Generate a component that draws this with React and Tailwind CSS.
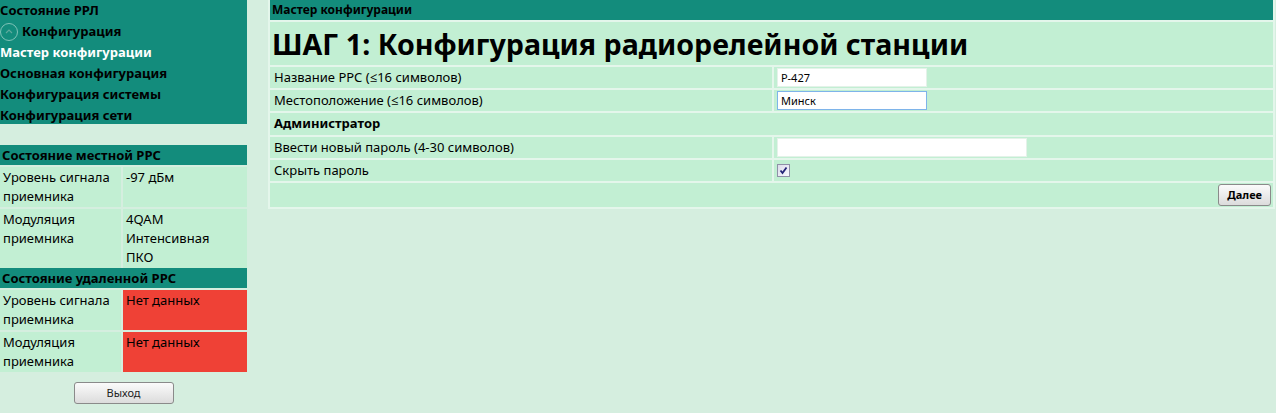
import { useState } from "react";

/* ================= DATA ================= */

const NAV = [
  { label: "Мастер конфигурации", active: true },
  { label: "Основная конфигурация" },
  { label: "Конфигурация системы" },
  { label: "Конфигурация сети" },
];

const LOCAL = [
  { k: ["Уровень сигнала", "приемника"], v: ["-97 дБм"] },
  { k: ["Модуляция", "приемника"], v: ["4QAM", "Интенсивная", "ПКО"] },
];

const REMOTE = [
  { k: ["Уровень сигнала", "приемника"], v: ["Нет данных"] },
  { k: ["Модуляция", "приемника"], v: ["Нет данных"] },
];

/* ================= PAGE ================= */

export default function App() {
  const [name, setName] = useState("Р-427");
  const [place, setPlace] = useState("Минск");
  const [pass, setPass] = useState("");
  const [hide, setHide] = useState(true);

  return (
    <div
      className="w-[1276px] h-[413px] bg-[#d5eedf] text-black flex overflow-hidden"
      style={{ fontFamily: '"Noto Sans", "Open Sans", sans-serif' }}
    >
      {/* LEFT COLUMN */}
      <div className="w-[247px] shrink-0 flex flex-col">
        <div className="bg-[#138c7c] h-[124px] pt-[0px] text-[13px] font-bold leading-[21px]">
          <div>Состояние РРЛ</div>
          <div className="flex items-center gap-[4px]">
            <span className="w-[18px] h-[18px] rounded-full border border-[#7fc3b8] flex items-center justify-center">
              <svg width="8" height="5" viewBox="0 0 8 5">
                <path d="M1 4 L4 1 L7 4" stroke="#5fa99d" strokeWidth="1.2" fill="none" />
              </svg>
            </span>
            <span>Конфигурация</span>
          </div>
          {NAV.map((n) => (
            <div key={n.label} className={n.active ? "text-white" : ""}>
              {n.label}
            </div>
          ))}
        </div>

        <StatusTable title="Состояние местной РРС" rows={LOCAL} className="mt-[19px]" />
        <StatusTable title="Состояние удаленной РРС" rows={REMOTE} red />

        <div className="flex justify-center mt-[10px]">
          <button className="w-[100px] h-[22px] rounded-[3px] border border-[#8a8a8a] bg-gradient-to-b from-[#fbfbfb] to-[#dcdcdc] text-[11px] text-[#222]">
            Выход
          </button>
        </div>
      </div>

      {/* RIGHT PANEL */}
      <div className="ml-[21px] flex-1 pr-[1px] -mt-[2px]">
        <table className="w-full border-separate border-spacing-[2px] bg-[#e4f6eb] text-[13px]">
          <tbody>
            <tr>
              <td colSpan={2} className="bg-[#138c7c] h-[20px] px-[2px] font-bold text-[12px] leading-[20px]">
                Мастер конфигурации
              </td>
            </tr>
            <tr>
              <td colSpan={2} className="bg-[#c2efd3] h-[43px] px-[2px] font-bold text-[28.6px] leading-[43px] whitespace-nowrap">
                ШАГ 1: Конфигурация радиорелейной станции
              </td>
            </tr>
            <Row label="Название РРС (≤16 символов)">
              <Input value={name} onChange={setName} w="w-[150px]" />
            </Row>
            <Row label="Местоположение (≤16 символов)">
              <Input value={place} onChange={setPlace} w="w-[150px]" focus />
            </Row>
            <tr>
              <td colSpan={2} className="bg-[#c2efd3] h-[22px] px-[4px] font-bold">
                Администратор
              </td>
            </tr>
            <Row label="Ввести новый пароль (4-30 символов)">
              <Input value={pass} onChange={setPass} w="w-[250px]" type={hide ? "password" : "text"} />
            </Row>
            <Row label="Скрыть пароль">
              <label className="flex items-center h-[21px] cursor-pointer">
                <input
                  type="checkbox"
                  checked={hide}
                  onChange={(e) => setHide(e.target.checked)}
                  className="sr-only"
                />
                <span className="w-[13px] h-[13px] border border-[#8f8fa8] bg-gradient-to-br from-[#dcdcea] to-[#f8f8ff] flex items-center justify-center">
                  {hide && (
                    <svg width="9" height="9" viewBox="0 0 9 9">
                      <path d="M1.5 4.5 L3.5 7 L7.5 1.5" stroke="#232377" strokeWidth="1.8" fill="none" />
                    </svg>
                  )}
                </span>
              </label>
            </Row>
            <tr>
              <td colSpan={2} className="bg-[#c2efd3] h-[24px] px-[2px] text-right">
                <button className="h-[22px] px-[8px] rounded-[3px] border border-[#8a8a8a] bg-gradient-to-b from-[#fbfbfb] to-[#dcdcdc] text-[11px] font-bold leading-[20px]">
                  Далее
                </button>
              </td>
            </tr>
          </tbody>
        </table>
      </div>
    </div>
  );
}

/* ================= COMPONENTS ================= */

function Row({ label, children }) {
  return (
    <tr>
      <td className="bg-[#c2efd3] w-[502px] h-[21px] px-[4px] leading-[21px]">{label}</td>
      <td className="bg-[#c2efd3] px-[3px] py-0">{children}</td>
    </tr>
  );
}

function Input({ value, onChange, w, type = "text", focus }) {
  return (
    <input
      type={type}
      value={value}
      onChange={(e) => onChange(e.target.value)}
      className={`${w} h-[19px] bg-white text-[11px] px-[3px] outline-none border ${
        focus ? "border-[#7eb4ea]" : "border-[#e4f2e9]"
      } block`}
    />
  );
}

function StatusTable({ title, rows, red, className = "" }) {
  return (
    <table className={`w-[251px] border-separate border-spacing-[2px] -mx-[2px] -my-[2px] text-[13px] leading-[19px] ${className}`}>
      <tbody>
        <tr>
          <td colSpan={2} className="bg-[#138c7c] h-[20px] px-[2px] font-bold">
            {title}
          </td>
        </tr>
        {rows.map((r, i) => (
          <tr key={i}>
            <td className="bg-[#c2efd3] w-[121px] align-top px-[3px] py-[1px]">
              {r.k.map((t) => <div key={t}>{t}</div>)}
            </td>
            <td className={`${red ? "bg-[#ef4136]" : "bg-[#c2efd3]"} align-top px-[3px] py-[1px]`}>
              {r.v.map((t) => <div key={t}>{t}</div>)}
            </td>
          </tr>
        ))}
      </tbody>
    </table>
  );
}
